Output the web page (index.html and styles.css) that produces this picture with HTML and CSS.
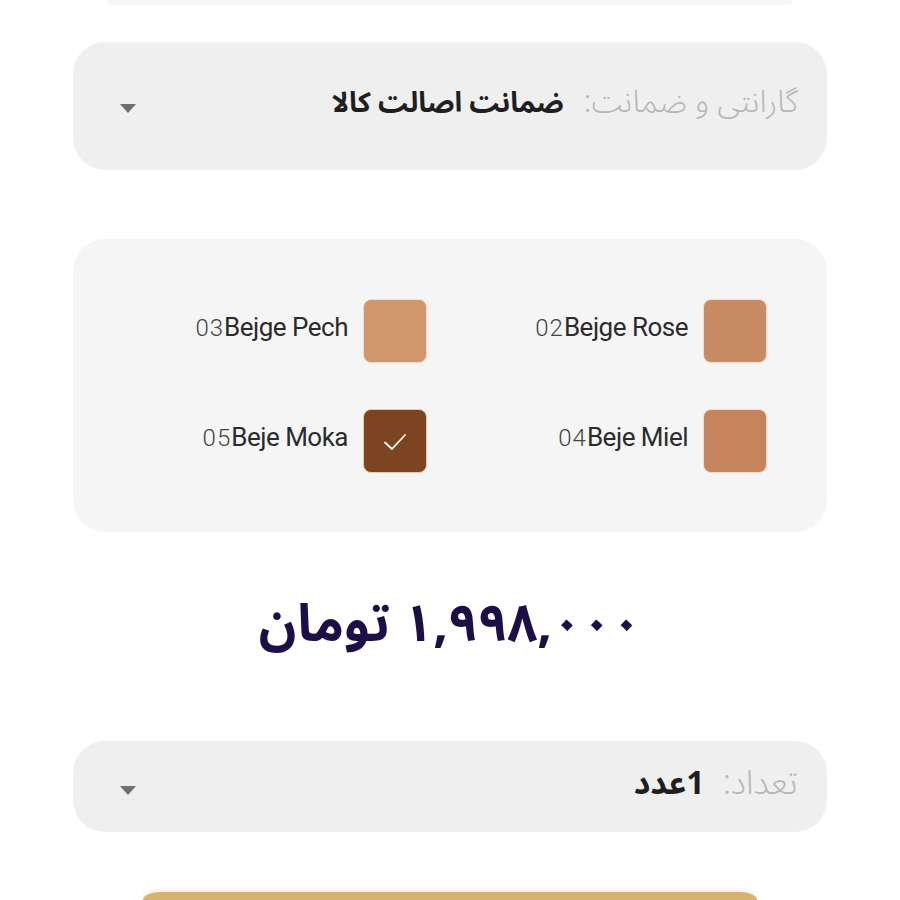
FILE: index.html
```html
<!DOCTYPE html>
<html lang="fa" dir="rtl">
<head>
<meta charset="utf-8">
<title>محصول</title>
<link rel="stylesheet" href="styles.css">
</head>
<body>
<div class="page">
  <div class="top-strip"></div>

  <div class="select-box warranty">
    <div class="select-text">
      <span class="select-label">گارانتی و ضمانت:</span>
      <span class="select-value">ضمانت اصالت کالا</span>
    </div>
    <span class="caret"></span>
  </div>

  <div class="swatch-box">
    <div class="swatch-item">
      <span class="swatch rose"></span>
      <span class="swatch-name"><span class="code">02</span>Bejge Rose</span>
    </div>
    <div class="swatch-item">
      <span class="swatch pech"></span>
      <span class="swatch-name"><span class="code">03</span>Bejge Pech</span>
    </div>
    <div class="swatch-item">
      <span class="swatch miel"></span>
      <span class="swatch-name"><span class="code">04</span>Beje Miel</span>
    </div>
    <div class="swatch-item">
      <span class="swatch moka selected">
        <svg class="check" width="26" height="26" viewBox="0 0 26 26"><path d="M3 13.5 L10 20 L23 6" fill="none" stroke="#ffffff" stroke-width="1.8" stroke-linecap="round" stroke-linejoin="round"/></svg>
      </span>
      <span class="swatch-name"><span class="code">05</span>Beje Moka</span>
    </div>
  </div>

  <div class="price">۱,۹۹۸,۰۰۰ تومان</div>

  <div class="select-box qty">
    <div class="select-text">
      <span class="select-label">تعداد:</span>
      <span class="select-value">1عدد</span>
    </div>
    <span class="caret"></span>
  </div>

  <div class="buy-button"></div>
</div>
</body>
</html>
```

FILE: styles.css
```css
html, body {
  margin: 0;
  padding: 0;
  background: #ffffff;
}
body {
  font-family: "Noto Sans Arabic", "DejaVu Sans", sans-serif;
  overflow: hidden;
  height: 900px;
}
.page {
  width: 754px;
  margin: 0 auto;
  display: flex;
  flex-direction: column;
  align-items: center;
}
.top-strip {
  width: 686px;
  height: 5px;
  background: #f6f6f6;
  border-radius: 0 0 6px 6px;
}
.select-box {
  width: 100%;
  box-sizing: border-box;
  background: #efeff0;
  border-radius: 32px;
  display: flex;
  justify-content: space-between;
  align-items: center;
  padding: 0 29px 0 0;
}
.warranty {
  margin-top: 37px;
  height: 128px;
  padding-bottom: 8px;
}
.select-text {
  display: flex;
  align-items: baseline;
  gap: 20px;
  white-space: nowrap;
}
.select-label {
  color: #b6b6b8;
  font-size: 31px;
  font-weight: 300;
}
.select-value {
  color: #1f1f1f;
  font-size: 28px;
  font-weight: 700;
}
.caret {
  width: 0;
  height: 0;
  border-left: 8px solid transparent;
  border-right: 8px solid transparent;
  border-top: 9px solid #6f6f6f;
  margin-left: 47px;
  margin-top: 12px;
}
.swatch-box {
  margin-top: 69px;
  width: 100%;
  box-sizing: border-box;
  height: 293px;
  background: #f5f5f5;
  border-radius: 32px;
  padding: 60px 60px 0 0;
  display: grid;
  grid-template-columns: 340px 340px;
  row-gap: 46px;
  align-content: start;
}
.swatch-item {
  display: flex;
  align-items: center;
  gap: 15px;
}
.swatch {
  width: 64px;
  height: 64px;
  box-sizing: border-box;
  border-radius: 8px;
  border: 1.5px solid #f6dcc5;
  display: flex;
  align-items: center;
  justify-content: center;
  flex: none;
}
.rose { background: #c98b63; }
.pech { background: #d0966c; }
.miel { background: #c5845c; }
.moka { background: #7d4421; border-color: #e9c9ad; }
.check { display: block; margin-top: 2px; }
.swatch-name {
  direction: ltr;
  font-family: Roboto, "Liberation Sans", sans-serif;
  font-size: 26px;
  color: #2b2b2b;
  letter-spacing: -0.5px;
  margin-bottom: 8px;
}
.code {
  font-weight: 300;
  font-size: 24px;
  color: #444;
  letter-spacing: 1px;
}
.price {
  margin-top: 50px;
  margin-bottom: 73px;
  height: 86px;
  line-height: 86px;
  font-size: 52px;
  font-weight: 700;
  color: #1b0f45;
  text-align: center;
  white-space: nowrap;
}
.qty {
  height: 91px;
}
.qty .caret {
  margin-top: 8px;
}
.qty .select-text {
  margin-bottom: 8px;
  gap: 18px;
}
.qty .select-label {
  font-size: 34px;
}
.qty .select-value {
  font-size: 32px;
}
.buy-button {
  margin-top: 60px;
  width: 614px;
  height: 8px;
  background: #d6b46f;
  border-radius: 18px 18px 0 0 / 8px 8px 0 0;
  box-shadow: 0 -2px 4px rgba(214, 180, 111, 0.25);
}
```
